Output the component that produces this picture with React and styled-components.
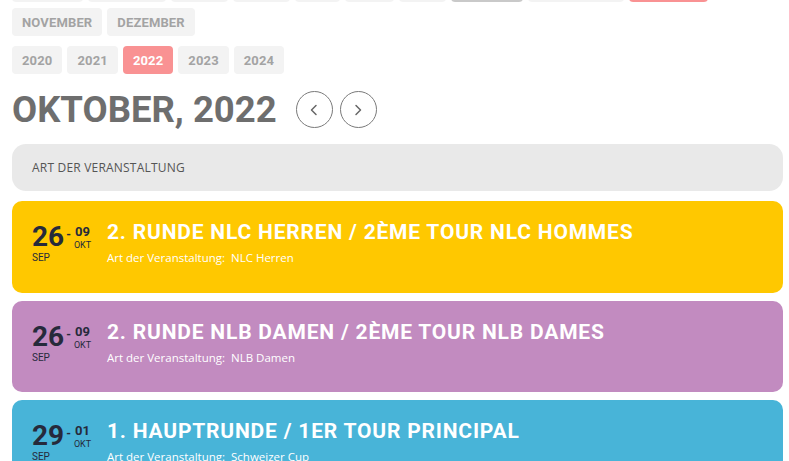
import React from 'react';
import styled, { createGlobalStyle } from 'styled-components';

const GlobalStyle = createGlobalStyle`
    html, body {
        margin: 0;
        padding: 0;
        background: #ffffff;
        overflow: hidden;
    }
    * {
        box-sizing: border-box;
    }
`

const Page = styled.div`
    display: flex;
    flex-direction: column;
    padding: 0 6px 0 12px;
    margin-top: -26px;
    font-family: Roboto, 'Liberation Sans', sans-serif;
`

const ButtonRow = styled.div`
    display: flex;
    flex-wrap: wrap;
    column-gap: 5px;
    row-gap: 6px;
    margin-bottom: ${props => props.$space}px;
`

const PillButton = styled.button`
    height: 28px;
    padding: 0 10px;
    border: none;
    border-radius: 4px;
    font-family: Roboto, 'Liberation Sans', sans-serif;
    font-weight: 700;
    font-size: 13px;
    letter-spacing: 0.15px;
    color: #a3a3a3;
    background: #f3f3f3;
    cursor: pointer;

    &.current {
        background: #c9c9c9;
    }

    &.active {
        background: #f99293;
        color: #ffffff;
    }
`

const HeadingRow = styled.div`
    display: flex;
    align-items: center;
    height: 37px;
    margin-bottom: 16px;
`

const Heading = styled.h1`
    margin: 0 19px 0 0;
    font-size: 36.5px;
    line-height: 37px;
    font-weight: 700;
    color: #6e6e6e;
`

const NavButton = styled.button`
    width: 37px;
    height: 37px;
    margin-right: 7px;
    padding: 0;
    border: 1px solid #7a7a7a;
    border-radius: 50%;
    background: #ffffff;
    display: flex;
    align-items: center;
    justify-content: center;
`

const FilterBar = styled.div`
    height: 47px;
    border-radius: 14px;
    background: #e9e9e9;
    display: flex;
    align-items: center;
    padding: 0 20px;
    margin-bottom: 10px;
    font-family: 'Open Sans', 'Liberation Sans', sans-serif;
    font-size: 12px;
    letter-spacing: 0.2px;
    color: #555555;
    text-transform: uppercase;
`

const EventList = styled.div`
    display: flex;
    flex-direction: column;
    gap: 8px;
`

const EventCard = styled.div`
    display: flex;
    align-items: flex-start;
    height: 91.5px;
    flex-shrink: 0;
    padding: 19px 20px;
    border-radius: 10px;
    background: ${props => props.$color};
`

const DateBlock = styled.div`
    width: 75px;
    flex-shrink: 0;
    display: flex;
    flex-direction: column;
    margin-top: 3px;
    color: #262a3b;
`

const DateTop = styled.div`
    display: flex;
    align-items: flex-start;
`

const Day = styled.span`
    font-size: 28px;
    line-height: 28px;
    font-weight: 700;
`

const Dash = styled.span`
    font-size: 12px;
    line-height: 12px;
    font-weight: 700;
    margin: 6px 3px 0 2px;
`

const EndDate = styled.div`
    display: flex;
    flex-direction: column;
    align-items: center;
    margin-top: 3px;
`

const EndDay = styled.span`
    font-size: 13px;
    line-height: 12px;
    font-weight: 700;
`

const EndMonth = styled.span`
    font-size: 9px;
    line-height: 10px;
    margin-top: 2px;
`

const StartMonth = styled.span`
    font-size: 10px;
    line-height: 12px;
    margin-top: 1px;
`

const EventInfo = styled.div`
    display: flex;
    flex-direction: column;
`

const EventTitle = styled.div`
    font-size: 21px;
    line-height: 24px;
    font-weight: 700;
    letter-spacing: 0.8px;
    color: #ffffff;
    text-transform: uppercase;
`

const EventMeta = styled.div`
    margin-top: 6px;
    font-family: 'Open Sans', 'Liberation Sans', sans-serif;
    font-size: 11.5px;
    line-height: 15px;
    color: #ffffff;
`

const months = ['Januar', 'Februar', 'März', 'April', 'Mai', 'Juni', 'Juli', 'August', 'September', 'Oktober', 'November', 'Dezember'];
const years = ['2020', '2021', '2022', '2023', '2024'];

const events = [
    { day: '26', month: 'SEP', endDay: '09', endMonth: 'OKT', title: '2. Runde NLC Herren / 2ème tour NLC Hommes', type: 'NLC Herren', color: '#ffc800' },
    { day: '26', month: 'SEP', endDay: '09', endMonth: 'OKT', title: '2. Runde NLB Damen / 2ème tour NLB Dames', type: 'NLB Damen', color: '#c28bc0' },
    { day: '29', month: 'SEP', endDay: '01', endMonth: 'OKT', title: '1. Hauptrunde / 1er tour principal', type: 'Schweizer Cup', color: '#48b4d8' },
];

function Chevron({ left }) {
    return (
        <svg width="10" height="12" viewBox="0 0 10 12">
            <polyline
                points={left ? '7,1.5 2.5,6 7,10.5' : '3,1.5 7.5,6 3,10.5'}
                fill="none"
                stroke="#666666"
                strokeWidth="1.5"
                strokeLinecap="round"
                strokeLinejoin="round"
            />
        </svg>
    );
}

function App() {
    return (
        <Page>
            <GlobalStyle />
            <ButtonRow $space={10}>
                {months.map((m, i) => (
                    <PillButton key={m} className={i === 9 ? 'active' : i === 7 ? 'current' : ''}>
                        {m.toUpperCase()}
                    </PillButton>
                ))}
            </ButtonRow>
            <ButtonRow $space={17}>
                {years.map(y => (
                    <PillButton key={y} className={y === '2022' ? 'active' : ''}>{y}</PillButton>
                ))}
            </ButtonRow>
            <HeadingRow>
                <Heading>OKTOBER, 2022</Heading>
                <NavButton><Chevron left /></NavButton>
                <NavButton><Chevron /></NavButton>
            </HeadingRow>
            <FilterBar>Art der Veranstaltung</FilterBar>
            <EventList>
                {events.map((ev, i) => (
                    <EventCard key={i} $color={ev.color}>
                        <DateBlock>
                            <DateTop>
                                <Day>{ev.day}</Day>
                                <Dash>-</Dash>
                                <EndDate>
                                    <EndDay>{ev.endDay}</EndDay>
                                    <EndMonth>{ev.endMonth}</EndMonth>
                                </EndDate>
                            </DateTop>
                            <StartMonth>{ev.month}</StartMonth>
                        </DateBlock>
                        <EventInfo>
                            <EventTitle>{ev.title}</EventTitle>
                            <EventMeta>Art der Veranstaltung:&nbsp; {ev.type}</EventMeta>
                        </EventInfo>
                    </EventCard>
                ))}
            </EventList>
        </Page>
    );
}

export default App;
